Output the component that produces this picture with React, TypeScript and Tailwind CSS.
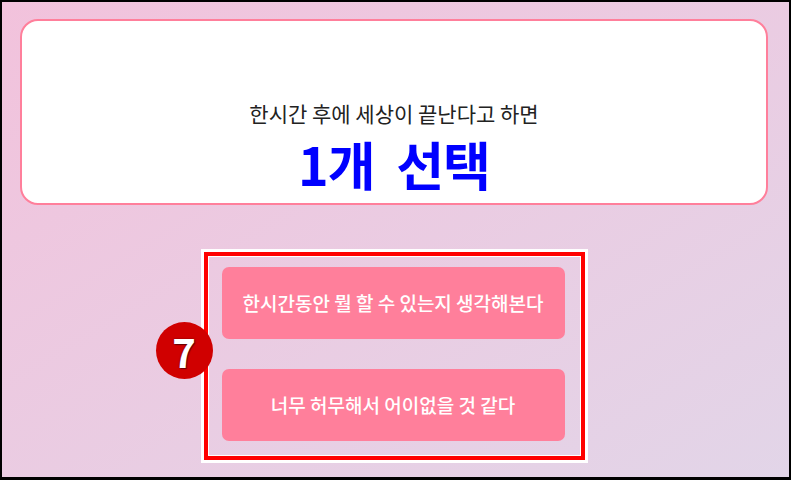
import React from "react";

const FONT = "font-['Noto_Sans_CJK_KR','Noto_Sans',sans-serif]";

const choices = [
  "한시간동안 뭘 할 수 있는지 생각해본다",
  "너무 허무해서 어이없을 것 같다",
];

export default function App() {
  return (
    <div
      className={`${FONT} h-[480px] w-[791px] overflow-hidden border-l-2 border-r-2 border-t-2 border-b-[3px] border-black bg-gradient-to-br from-[#f2c2dc] to-[#e2d5e8]`}
    >
      <div className="pl-[18px] pt-[17px]">
        <div className="flex h-[186px] w-[748px] flex-col items-center justify-end rounded-[18px] border-2 border-[#ff7f9b] bg-white pb-[6px]">
          <p className="text-[21px] leading-[28px] text-[#222]">한시간 후에 세상이 끝난다고 하면</p>
          <p className="mt-[4px] text-[52px] font-bold leading-[66px] tracking-[-1px] text-[#0000ff]">
            1개&nbsp;&nbsp;선택
          </p>
        </div>
      </div>

      <div className="mt-[47px] flex justify-center">
        <div className="relative ml-[-3px] w-[381px] border-4 border-[#ff0000] pb-[15px] pl-[14px] pr-[16px] pt-[11px] shadow-[0_0_0_3px_#ffffff,inset_0_0_0_1px_#ffffff]">
          <div className="flex flex-col gap-[30px]">
            {choices.map((label) => (
              <button
                key={label}
                type="button"
                className="flex h-[72px] w-full items-center justify-center rounded-[7px] bg-[#ff7f9b] text-[19px] font-medium text-white"
              >
                {label}
              </button>
            ))}
          </div>

          <div className="absolute left-[-52px] top-[66px] flex h-[57px] w-[57px] items-center justify-center rounded-full bg-[#d00000]">
            <span className="text-[40px] font-bold leading-none text-white [text-shadow:0_0_2px_#600,1px_1px_1px_#600]">
              7
            </span>
          </div>
        </div>
      </div>
    </div>
  );
}
